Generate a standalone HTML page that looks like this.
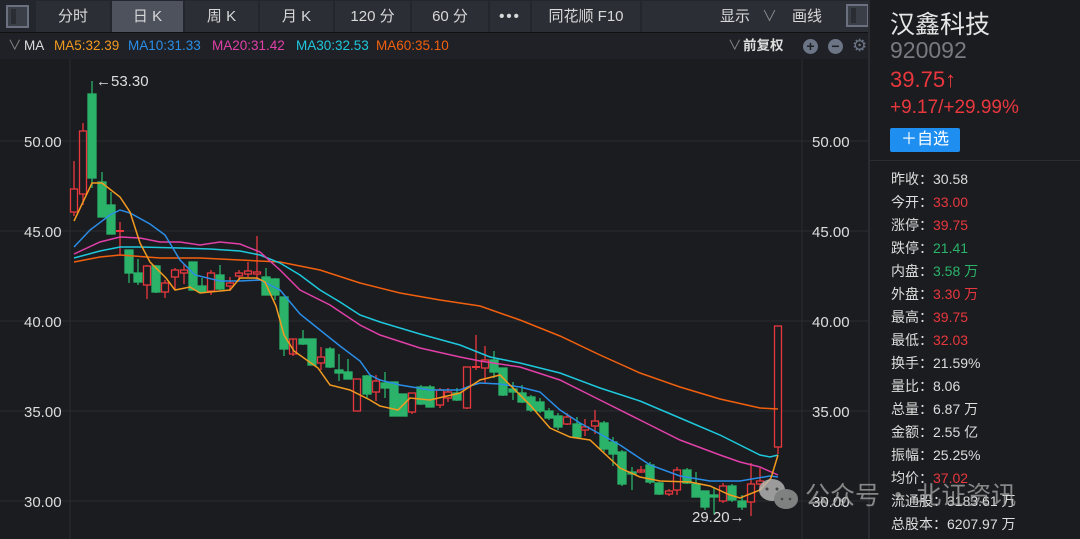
<!DOCTYPE html>
<html><head><meta charset="utf-8"><style>
*{margin:0;padding:0;box-sizing:border-box}
body{width:1080px;height:539px;background:#1b1c20;font-family:"Liberation Sans","Noto Sans CJK SC",sans-serif;overflow:hidden;position:relative;color:#ddd}
.tb{position:absolute;top:0;left:0;width:868px;height:33px;background:#23262c;border-bottom:1px solid #111}
.tab{position:absolute;top:1px;height:31px;background:#2b2e35;color:#d8d8d8;font-size:15px;line-height:31px;text-align:center}
.sub{position:absolute;top:33px;left:0;width:868px;height:26px;background:#1f2126;font-size:13.5px;line-height:26px}
.rp{position:absolute;left:868px;top:0;width:212px;height:539px;background:#1b1c20;border-left:2px solid #2a2c31}
.row{position:absolute;left:21px;font-size:14px;color:#ddd}
.r{color:#e8383d}.g{color:#2bb36a}
</style></head><body>
<div class="tb">
<div class="tab" style="left:3px;width:30px;background:#23262c"><div style="position:absolute;left:3px;top:4px;width:23px;height:23px;border:2px solid #6a7080;background:#3a3e46"><div style="position:absolute;left:3px;top:2px;width:5px;height:15px;background:#2a2d33"></div></div></div>
<div class="tab" style="left:36px;width:74px">分时</div>
<div class="tab" style="left:112px;width:71px;background:#4d525c">日 K</div>
<div class="tab" style="left:185px;width:73px">周 K</div>
<div class="tab" style="left:260px;width:73px">月 K</div>
<div class="tab" style="left:335px;width:75px">120 分</div>
<div class="tab" style="left:412px;width:76px">60 分</div>
<div class="tab" style="left:490px;width:40px;font-weight:bold;letter-spacing:2px">•••</div>
<div class="tab" style="left:532px;width:108px">同花顺 F10</div>
<div class="tab" style="left:642px;width:226px;background:#2b2e35"><span style="position:absolute;left:78px">显示</span><span style="position:absolute;left:120px;color:#888">∨</span><span style="position:absolute;left:150px">画线</span><div style="position:absolute;left:204px;top:3px;width:23px;height:23px;border:2px solid #6a7080;background:#3a3e46"><div style="position:absolute;left:3px;top:2px;width:5px;height:15px;background:#2a2d33"></div></div></div>
</div>
<div class="sub"><span style="position:absolute;left:8px;color:#888">∨</span><span style="position:absolute;left:24px;color:#ddd">MA</span>
<span style="position:absolute;left:54px;color:#f39a1f">MA5:32.39</span>
<span style="position:absolute;left:128px;color:#2a8ee8">MA10:31.33</span>
<span style="position:absolute;left:212px;color:#e040a8">MA20:31.42</span>
<span style="position:absolute;left:296px;color:#1ec8dc">MA30:32.53</span>
<span style="position:absolute;left:376px;color:#f2600e">MA60:35.10</span>
<span style="position:absolute;left:728px;color:#888">∨</span><span style="position:absolute;left:743px;color:#ddd;font-weight:bold">前复权</span>
<span style="position:absolute;left:803px;top:6px;width:15px;height:15px;border-radius:50%;background:#6c7585;color:#1f2126;font-size:14px;line-height:15px;text-align:center;font-weight:bold">+</span>
<span style="position:absolute;left:828px;top:6px;width:15px;height:15px;border-radius:50%;background:#6c7585;color:#1f2126;font-size:14px;line-height:14px;text-align:center;font-weight:bold">−</span>
<span style="position:absolute;left:852px;color:#6c7585;font-size:17px">⚙</span>
</div>
<svg style="position:absolute;left:0;top:59px" width="868" height="480" viewBox="0 59 868 480">
<g stroke="#2a2c31" stroke-width="1">
<line x1="0" y1="141" x2="868" y2="141"/><line x1="0" y1="231" x2="868" y2="231"/><line x1="0" y1="321" x2="868" y2="321"/><line x1="0" y1="411" x2="868" y2="411"/><line x1="0" y1="501" x2="868" y2="501"/>
<line x1="802" y1="59" x2="802" y2="539"/><line x1="70" y1="59" x2="70" y2="539"/>
</g>
<g font-size="15" fill="#ddd" font-family="Liberation Sans">
<text x="24" y="147">50.00</text><text x="24" y="237">45.00</text><text x="24" y="327">40.00</text><text x="24" y="417">35.00</text><text x="24" y="507">30.00</text>
<text x="812" y="147">50.00</text><text x="812" y="237">45.00</text><text x="812" y="327">40.00</text><text x="812" y="417">35.00</text><text x="812" y="507">30.00</text>
<text x="96" y="86">←53.30</text><text x="692" y="522">29.20→</text>
</g>
<g id="c" stroke-width="1.3">
<g stroke="#2bb36a" fill="#2bb36a">
<line x1="92" y1="81" x2="92" y2="188"/><rect x="88" y="94" width="8" height="84"/>
<line x1="102" y1="172" x2="102" y2="217"/><rect x="98" y="182" width="8" height="35"/>
<line x1="111" y1="192" x2="111" y2="234"/><rect x="107" y="205" width="8" height="29"/>
<line x1="129" y1="250" x2="129" y2="283"/><rect x="125" y="250" width="8" height="23"/>
<line x1="138" y1="259" x2="138" y2="285"/><rect x="134" y="273" width="8" height="9"/>
<line x1="156" y1="265" x2="156" y2="293"/><rect x="152" y="266" width="8" height="26"/>
<line x1="193" y1="262" x2="193" y2="290"/><rect x="189" y="262" width="8" height="28"/>
<line x1="202" y1="278" x2="202" y2="293"/><rect x="198" y="286" width="8" height="6"/>
<line x1="220" y1="265" x2="220" y2="290"/><rect x="216" y="275" width="8" height="14"/>
<line x1="266" y1="268" x2="266" y2="295"/><rect x="262" y="277" width="8" height="18"/>
<line x1="275" y1="278" x2="275" y2="300"/><rect x="271" y="279" width="8" height="16"/>
<line x1="284" y1="297" x2="284" y2="356"/><rect x="280" y="297" width="8" height="52"/>
<line x1="303" y1="330" x2="303" y2="345"/><rect x="299" y="339" width="8" height="5"/>
<line x1="312" y1="339" x2="312" y2="365"/><rect x="308" y="339" width="8" height="26"/>
<line x1="330" y1="347" x2="330" y2="368"/><rect x="326" y="349" width="8" height="18"/>
<line x1="339" y1="354" x2="339" y2="381"/><rect x="335" y="370" width="8" height="3"/>
<line x1="348" y1="359" x2="348" y2="379"/><rect x="344" y="372" width="8" height="7"/>
<line x1="367" y1="375" x2="367" y2="398"/><rect x="363" y="376" width="8" height="18"/>
<line x1="385" y1="372" x2="385" y2="398"/><rect x="381" y="383" width="8" height="5"/>
<line x1="394" y1="382" x2="394" y2="416"/><rect x="390" y="382" width="8" height="34"/>
<line x1="403" y1="394" x2="403" y2="416"/><rect x="399" y="394" width="8" height="22"/>
<line x1="421" y1="385" x2="421" y2="405"/><rect x="417" y="387" width="8" height="17"/>
<line x1="430" y1="385" x2="430" y2="407"/><rect x="426" y="387" width="8" height="20"/>
<line x1="457" y1="388" x2="457" y2="401"/><rect x="453" y="393" width="8" height="7"/>
<line x1="494" y1="351" x2="494" y2="378"/><rect x="490" y="360" width="8" height="12"/>
<line x1="503" y1="368" x2="503" y2="396"/><rect x="499" y="368" width="8" height="27"/>
<line x1="513" y1="382" x2="513" y2="400"/><rect x="509" y="389" width="8" height="3"/>
<line x1="522" y1="385" x2="522" y2="403"/><rect x="518" y="393" width="8" height="9"/>
<line x1="531" y1="395" x2="531" y2="412"/><rect x="527" y="397" width="8" height="13"/>
<line x1="540" y1="398" x2="540" y2="413"/><rect x="536" y="402" width="8" height="9"/>
<line x1="549" y1="408" x2="549" y2="420"/><rect x="545" y="411" width="8" height="7"/>
<line x1="558" y1="413" x2="558" y2="430"/><rect x="554" y="416" width="8" height="11"/>
<line x1="577" y1="417" x2="577" y2="438"/><rect x="573" y="424" width="8" height="13"/>
<line x1="604" y1="421" x2="604" y2="452"/><rect x="600" y="423" width="8" height="26"/>
<line x1="613" y1="437" x2="613" y2="466"/><rect x="609" y="442" width="8" height="12"/>
<line x1="622" y1="450" x2="622" y2="486"/><rect x="618" y="452" width="8" height="32"/>
<line x1="632" y1="467" x2="632" y2="490"/><rect x="628" y="472" width="8" height="2"/>
<line x1="650" y1="462" x2="650" y2="484"/><rect x="646" y="465" width="8" height="17"/>
<line x1="659" y1="482" x2="659" y2="495"/><rect x="655" y="483" width="8" height="11"/>
<line x1="687" y1="468" x2="687" y2="484"/><rect x="683" y="470" width="8" height="13"/>
<line x1="696" y1="472" x2="696" y2="497"/><rect x="692" y="484" width="8" height="13"/>
<line x1="705" y1="491" x2="705" y2="510"/><rect x="701" y="491" width="8" height="16"/>
<line x1="714" y1="487" x2="714" y2="514"/><rect x="710" y="495" width="8" height="2"/>
<line x1="732" y1="484" x2="732" y2="502"/><rect x="728" y="486" width="8" height="14"/>
<line x1="742" y1="495" x2="742" y2="510"/><rect x="738" y="501" width="8" height="6"/>
</g>
<g stroke="#e8383d" fill="none">
<line x1="74" y1="161" x2="74" y2="189"/><line x1="74" y1="212" x2="74" y2="216"/><rect x="70.5" y="189" width="7" height="23"/>
<line x1="83" y1="123" x2="83" y2="131"/><line x1="83" y1="194" x2="83" y2="205"/><rect x="79.5" y="131" width="7" height="63"/>
<line x1="120" y1="222" x2="120" y2="255"/><line x1="116" y1="231" x2="124" y2="231" stroke-width="2"/>
<line x1="147" y1="265" x2="147" y2="299"/><rect x="143.5" y="266" width="7" height="19" fill="#1b1c20"/>
<line x1="165" y1="280" x2="165" y2="298"/><rect x="161.5" y="283" width="7" height="9" fill="#1b1c20"/>
<line x1="175" y1="268" x2="175" y2="289"/><rect x="171.5" y="270" width="7" height="7" fill="#1b1c20"/>
<line x1="184" y1="264" x2="184" y2="284"/><rect x="180.5" y="270" width="7" height="3" fill="#1b1c20"/>
<line x1="211" y1="270" x2="211" y2="295"/><rect x="207.5" y="273" width="7" height="18" fill="#1b1c20"/>
<line x1="230" y1="277" x2="230" y2="291"/><rect x="226.5" y="283" width="7" height="3" fill="#1b1c20"/>
<line x1="239" y1="270" x2="239" y2="281"/><rect x="235.5" y="273" width="7" height="3" fill="#1b1c20"/>
<line x1="248" y1="262" x2="248" y2="277"/><rect x="244.5" y="271" width="7" height="3" fill="#1b1c20"/>
<line x1="257" y1="236" x2="257" y2="281"/><rect x="253.5" y="272" width="7" height="2" fill="#1b1c20"/>
<line x1="293" y1="339" x2="293" y2="356"/><rect x="289.5" y="339" width="7" height="15"/>
<line x1="321" y1="347" x2="321" y2="370"/><rect x="317.5" y="357" width="7" height="6" fill="#1b1c20"/>
<rect x="353.5" y="379" width="7" height="32"/>
<line x1="376" y1="375" x2="376" y2="401"/><rect x="372.5" y="381" width="7" height="11" fill="#1b1c20"/>
<line x1="412" y1="393" x2="412" y2="414"/><rect x="408.5" y="393" width="7" height="19" fill="#1b1c20"/>
<line x1="440" y1="388" x2="440" y2="408"/><rect x="436.5" y="390" width="7" height="15" fill="#1b1c20"/>
<line x1="448" y1="388" x2="448" y2="402"/><rect x="444.5" y="392" width="7" height="6" fill="#1b1c20"/>
<line x1="467" y1="367" x2="467" y2="409"/><rect x="463.5" y="367" width="7" height="41" fill="#1b1c20"/>
<line x1="476" y1="335" x2="476" y2="370"/><line x1="472" y1="367" x2="480" y2="367" stroke-width="2"/>
<line x1="485" y1="346" x2="485" y2="383"/><rect x="481.5" y="360" width="7" height="8" fill="#1b1c20"/>
<line x1="567" y1="413" x2="567" y2="425"/><rect x="563.5" y="417" width="7" height="7" fill="#1b1c20"/>
<line x1="585" y1="419" x2="585" y2="436"/><rect x="581.5" y="427" width="7" height="3" fill="#1b1c20"/>
<line x1="595" y1="410" x2="595" y2="434"/><rect x="591.5" y="421" width="7" height="5" fill="#1b1c20"/>
<line x1="641" y1="466" x2="641" y2="473"/><rect x="637.5" y="470" width="7" height="2"/>
<line x1="669" y1="489" x2="669" y2="496"/><rect x="665.5" y="491" width="7" height="3" fill="#1b1c20"/>
<line x1="677" y1="467" x2="677" y2="495"/><rect x="673.5" y="470" width="7" height="20" fill="#1b1c20"/>
<line x1="723" y1="483" x2="723" y2="503"/><rect x="719.5" y="486" width="7" height="15" fill="#1b1c20"/>
<line x1="751" y1="463" x2="751" y2="516"/><rect x="747.5" y="484" width="7" height="18" fill="#1b1c20"/>
<line x1="760" y1="468" x2="760" y2="490"/><rect x="756.5" y="481" width="7" height="3" fill="#1b1c20"/>
<line x1="778" y1="447" x2="778" y2="454"/><rect x="774.5" y="326" width="7" height="121" fill="#1b1c20"/>
</g>
</g>
<g fill="none" stroke-width="1.5">
<polyline stroke="#f2600e" points="74,262 100,257 120,255 160,258 200,258 240,260 280,262 320,270 360,283 400,293 440,300 480,306 520,320 560,336 600,355 640,373 680,387 720,399 760,408 778,409"/>
<polyline stroke="#1ec8dc" points="74,258 100,251 120,247 140,247 180,248 210,249 240,251 260,255 280,263 300,275 320,290 340,302 360,315 380,322 420,334 460,345 490,357 520,363 560,373 600,388 640,401 680,418 720,435 760,455 770,457 778,455"/>
<polyline stroke="#e040a8" points="74,254 100,242 120,237 140,238 160,242 180,242 200,245 220,242 240,244 260,252 280,270 300,290 330,305 360,325 380,335 420,348 460,357 480,361 520,367 560,380 600,400 640,420 680,440 720,455 740,462 760,467 778,475"/>
<polyline stroke="#2a8ee8" points="74,247 90,230 110,215 120,210 130,213 150,224 165,235 180,260 195,275 220,281 240,281 260,280 280,290 300,314 320,330 340,346 360,361 370,375 380,380 400,385 430,390 460,390 470,386 480,383 500,384 520,387 540,392 560,410 580,423 620,445 650,465 680,476 710,481 740,481 770,476 778,477"/>
<polyline stroke="#f39a1f" points="74,221 92,183 102,183 120,197 130,212 140,243 150,262 166,278 175,290 190,287 200,293 230,290 240,278 257,278 265,282 276,306 284,335 294,351 318,368 330,385 350,390 370,400 380,406 398,410 410,398 430,400 460,393 480,380 500,375 510,385 530,405 550,428 570,437 590,440 620,468 640,477 660,481 690,482 710,486 730,495 740,498 760,490 771,478 778,455"/>
</g>
</svg>
<div class="rp">
<div style="position:absolute;left:20px;top:5px;font-size:25px;color:#e6e6e6">汉鑫科技</div>
<div style="position:absolute;left:20px;top:37px;font-size:23px;color:#777a80">920092</div>
<div style="position:absolute;left:20px;top:67px;font-size:22px" class="r">39.75↑</div>
<div style="position:absolute;left:20px;top:97px;font-size:19px" class="r">+9.17/+29.99%</div>
<div style="position:absolute;left:20px;top:128px;width:70px;height:24px;background:#1e8ff0;border-radius:2px;color:#fff;font-size:16px;line-height:24px;text-align:center">＋自选</div>
<div style="position:absolute;left:0;top:160px;width:212px;height:1px;background:#2a2c31"></div>
<div class="row" style="top:169px">昨收：30.58</div>
<div class="row" style="top:192px">今开：<span class="r">33.00</span></div>
<div class="row" style="top:215px">涨停：<span class="r">39.75</span></div>
<div class="row" style="top:238px">跌停：<span class="g">21.41</span></div>
<div class="row" style="top:261px">内盘：<span class="g">3.58 万</span></div>
<div class="row" style="top:284px">外盘：<span class="r">3.30 万</span></div>
<div class="row" style="top:307px">最高：<span class="r">39.75</span></div>
<div class="row" style="top:330px">最低：<span class="r">32.03</span></div>
<div class="row" style="top:353px">换手：21.59%</div>
<div class="row" style="top:376px">量比：8.06</div>
<div class="row" style="top:399px">总量：6.87 万</div>
<div class="row" style="top:422px">金额：2.55 亿</div>
<div class="row" style="top:445px">振幅：25.25%</div>
<div class="row" style="top:468px">均价：<span class="r">37.02</span></div>
<div class="row" style="top:491px">流通股：3183.61 万</div>
<div class="row" style="top:514px">总股本：6207.97 万</div>
</div>
<svg style="position:absolute;left:0;top:0" width="1080" height="539">
<g opacity="0.8"><ellipse cx="772" cy="490" rx="13" ry="11" fill="#bbb"/><ellipse cx="786" cy="499" rx="12" ry="10" fill="#999"/>
<circle cx="767" cy="489" r="1.5" fill="#555"/><circle cx="777" cy="489" r="1.5" fill="#555"/><circle cx="782" cy="499" r="1.3" fill="#555"/><circle cx="790" cy="499" r="1.3" fill="#555"/></g>
<text x="805" y="504" font-size="25" fill="#aaa" opacity="0.75" font-family="Noto Sans CJK SC, sans-serif">公众号 · 北证资讯</text>
</svg>
</body></html>
